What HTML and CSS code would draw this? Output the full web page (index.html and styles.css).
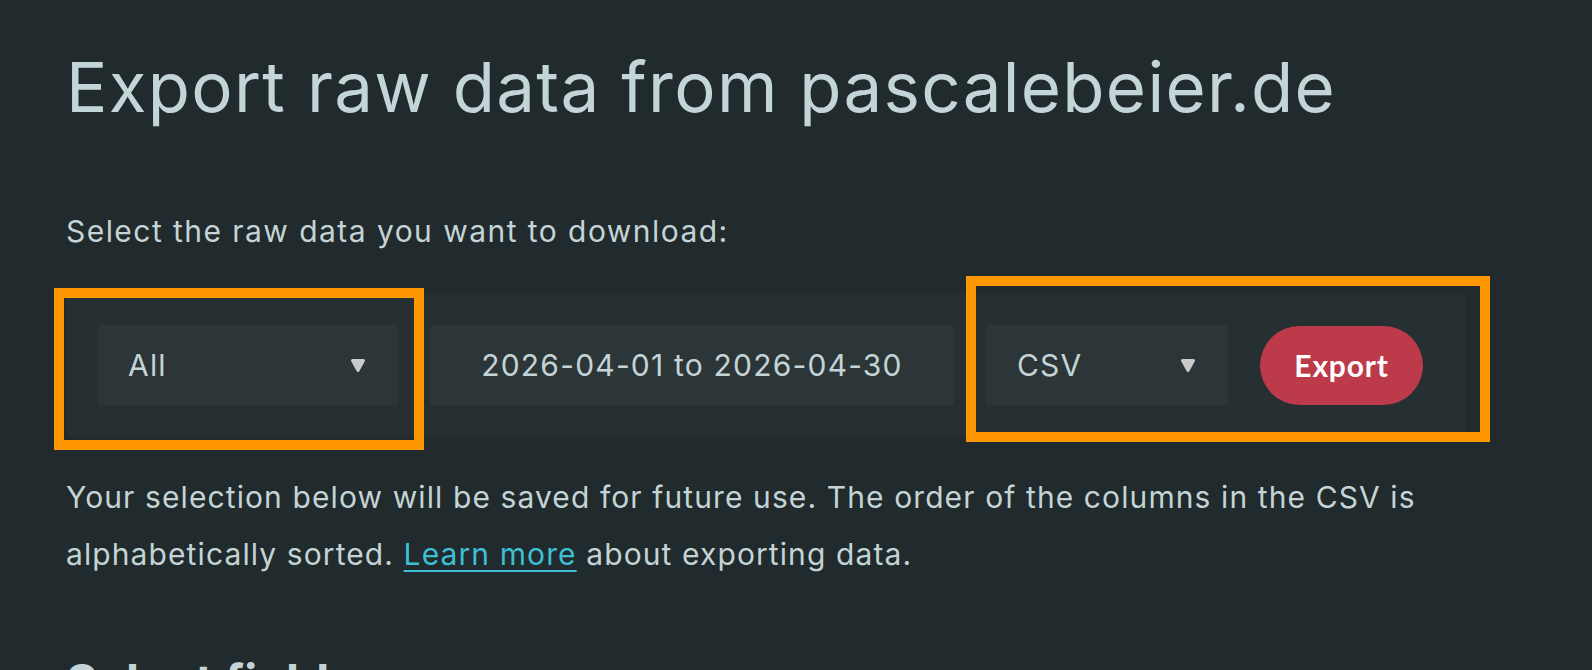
FILE: index.html
```html
<!DOCTYPE html>
<html lang="en">
<head>
<meta charset="utf-8">
<title>Export raw data</title>
<link rel="stylesheet" href="styles.css">
</head>
<body>
<main class="page">
  <h1 class="title">Export raw data from pascalebeier.de</h1>
  <p class="intro">Select the raw data you want to download:</p>
  <div class="panel">
    <div class="field select select-type">
      <span>All</span>
      <svg class="caret" width="16" height="15" viewBox="0 0 16 15"><path d="M2.5 2.5 H13.5 L8 12.5 Z"/></svg>
    </div>
    <div class="field date">2026-04-01 to 2026-04-30</div>
    <div class="field select select-format">
      <span>CSV</span>
      <svg class="caret" width="16" height="15" viewBox="0 0 16 15"><path d="M2.5 2.5 H13.5 L8 12.5 Z"/></svg>
    </div>
    <button class="export">Export</button>
    <div class="highlight highlight-type"></div>
    <div class="highlight highlight-export"></div>
  </div>
  <p class="note">Your selection below will be saved for future use. The order of the columns in the CSV is<br>alphabetically sorted. <a href="#">Learn more</a> about exporting data.</p>
  <h2 class="section">Select fields</h2>
</main>
</body>
</html>
```

FILE: styles.css
```css
* { box-sizing: border-box; }

html, body {
  margin: 0;
  padding: 0;
  background: #212a2c;
  height: 100%;
  overflow: hidden;
}

body {
  font-family: "Inter", "DejaVu Sans", sans-serif;
  color: #c4d4d6;
}

.page {
  padding: 45px 0 0 66px;
}

.title {
  margin: 0;
  font-size: 69px;
  line-height: 84px;
  font-weight: 400;
  letter-spacing: 1.3px;
  color: #c4d5d7;
}

.intro {
  margin: 82px 0 0;
  font-size: 30px;
  line-height: 40px;
  letter-spacing: 1.45px;
}

.panel {
  position: relative;
  margin-top: 42px;
  width: 1400px;
  height: 144px;
  padding: 32px 43px 32px 32px;
  display: flex;
  align-items: center;
  gap: 32px;
  background: #263032;
  border-radius: 8px;
}

.field {
  height: 80px;
  background: #2c3638;
  border-radius: 2px;
  font-size: 30px;
  letter-spacing: 1.2px;
  color: #c4d4d6;
  display: flex;
  align-items: center;
}

.select {
  justify-content: space-between;
  padding: 0 32px 0 30px;
}

.select-type { width: 300px; }
.select-format { width: 242px; padding-left: 31px; }

.caret path {
  fill: #c9cbcb;
  stroke: #c9cbcb;
  stroke-width: 3;
  stroke-linejoin: round;
}

.date {
  width: 524px;
  justify-content: center;
}

.export {
  width: 163px;
  height: 79px;
  border: 0;
  border-radius: 40px;
  background: #bc3a49;
  color: #ffffff;
  font-family: "Lato", "Open Sans", sans-serif;
  font-weight: 700;
  font-size: 30px;
  letter-spacing: 0.8px;
  padding: 0;
}

.highlight {
  position: absolute;
  border: 10px solid #ff9800;
  pointer-events: none;
}

.highlight-type {
  left: -12px;
  top: -5px;
  width: 370px;
  height: 162px;
}

.highlight-export {
  left: 900px;
  top: -17px;
  width: 524px;
  height: 166px;
}

.note {
  margin: 32px 0 0;
  font-size: 30px;
  line-height: 57px;
  letter-spacing: 1.1px;
  width: 1400px;
}

.note a {
  color: #3dbfd5;
  text-decoration: underline;
  text-underline-offset: 5px;
  text-decoration-thickness: 2px;
}

.section {
  margin: 70px 0 0;
  font-size: 48px;
  line-height: 58px;
  font-weight: 700;
}
```
